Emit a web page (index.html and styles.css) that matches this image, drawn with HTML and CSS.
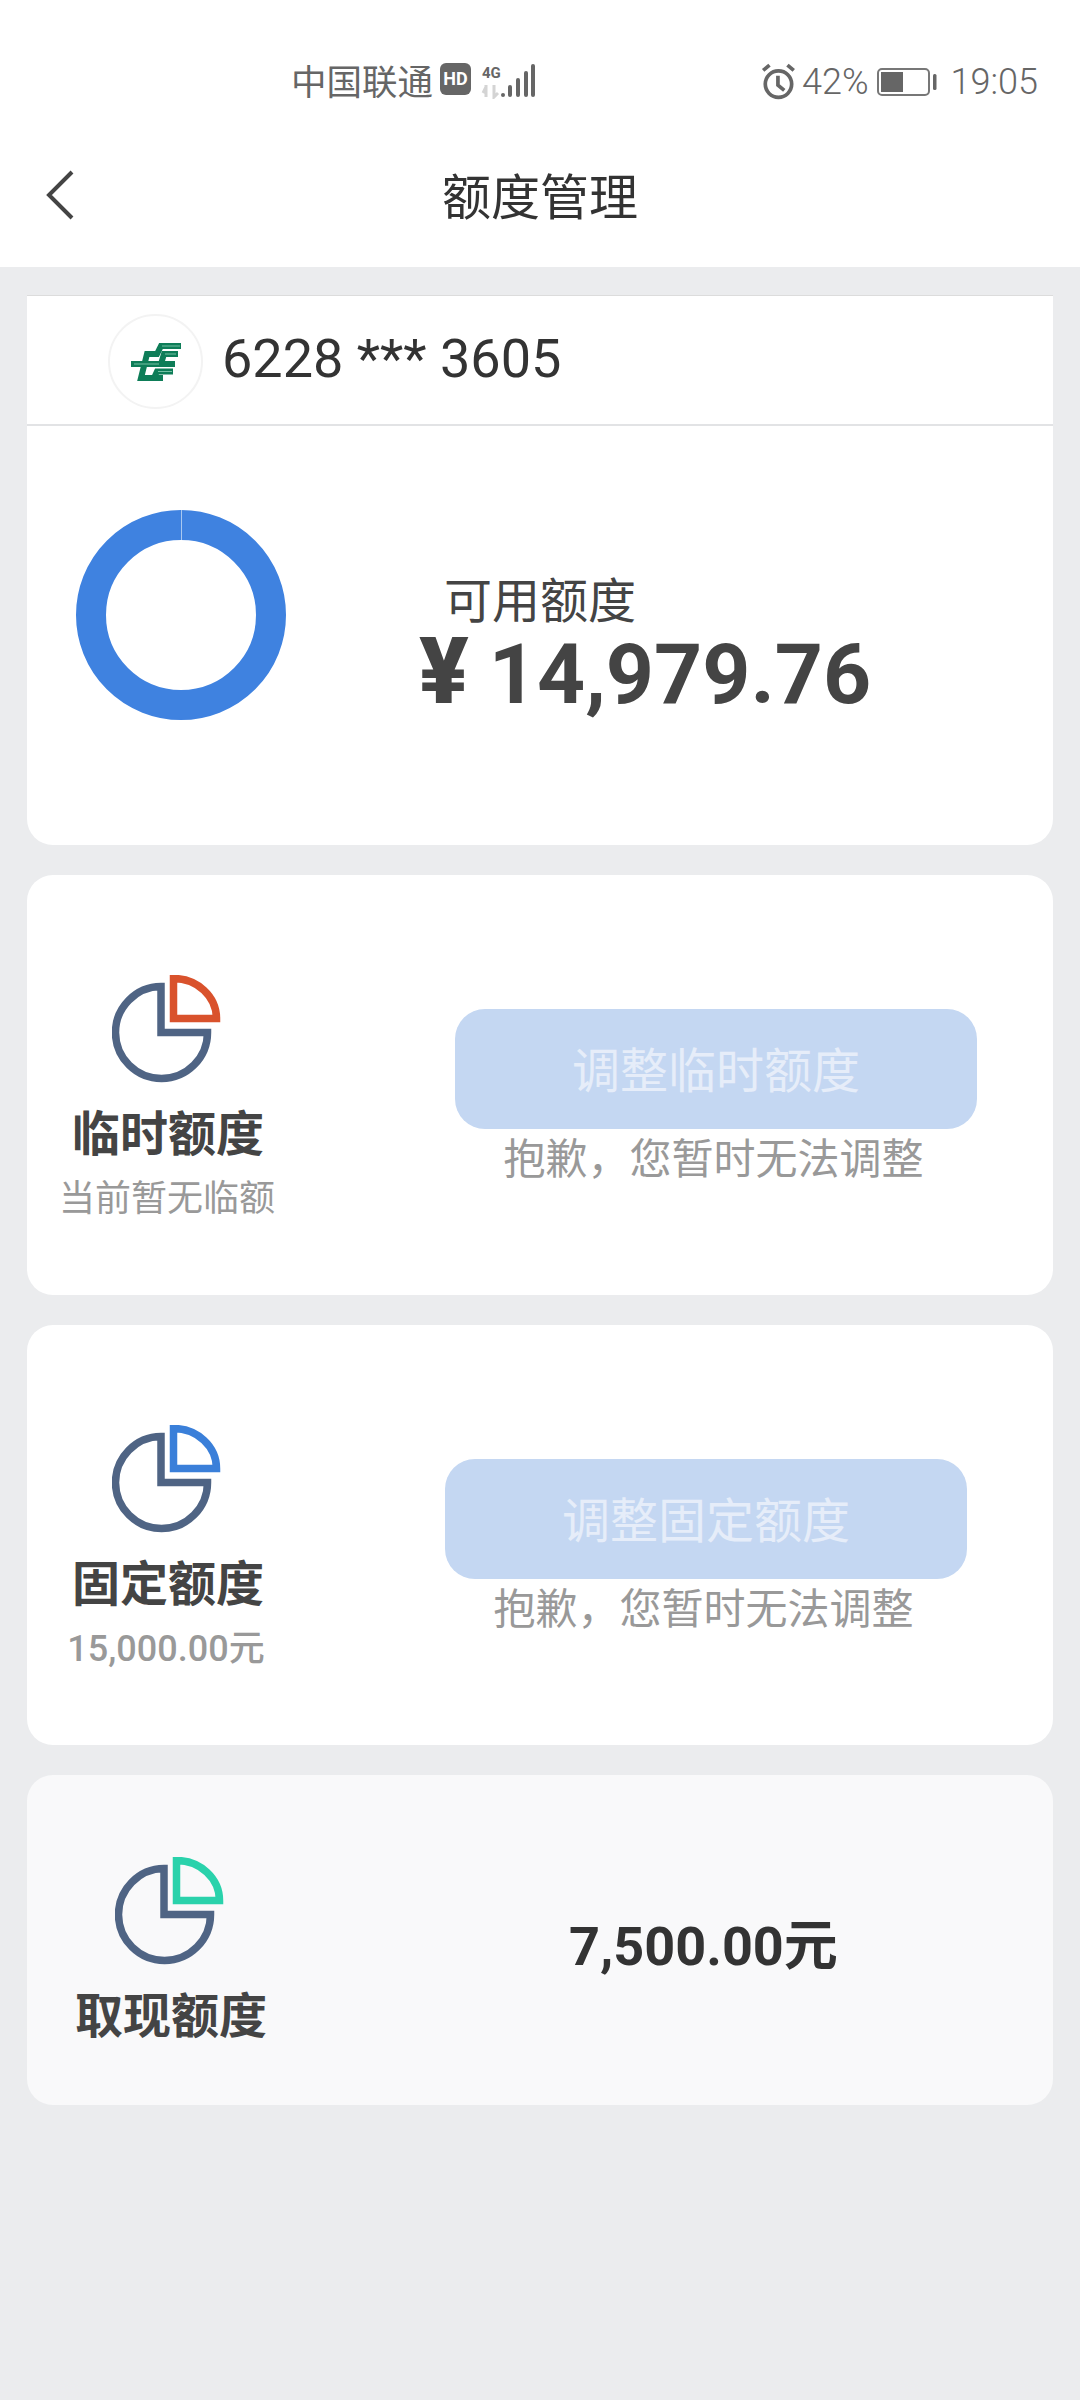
FILE: index.html
```html
<!DOCTYPE html>
<html lang="zh-CN">
<head>
    <meta charset="UTF-8">
    <meta name="viewport" content="width=device-width, initial-scale=1.0">
    <title>额度管理</title>
    <link rel="stylesheet" href="styles.css">
</head>
<body>
    <header class="top">
        <div class="status-bar">
            <div class="status-left">
                <span>中国联通</span>
                <span class="hd">HD</span>
                <svg class="signal" width="56" height="36" viewBox="0 0 56 36">
                    <text class="signal-4g" x="1" y="15">4G</text>
                    <path class="signal-off" d="M5 22v12M2 30l3-6M13 22v12l4-4"/>
                    <rect x="20" y="30" width="4" height="4" rx="2"/>
                    <rect x="27" y="22" width="4" height="12" rx="2"/>
                    <rect x="35" y="15" width="4" height="19" rx="2"/>
                    <rect x="43" y="8" width="4" height="26" rx="2"/>
                    <rect x="50" y="1" width="4" height="33" rx="2"/>
                </svg>
            </div>
            <div class="status-right">
                <svg class="alarm" width="38" height="38" viewBox="0 0 36 36">
                    <circle cx="17.500" cy="20" r="12.500"/>
                    <path d="M17 12v9l6 5M3 7l6-5M32 7l-6-5"/>
                </svg>
                <span class="pct">42%</span>
                <svg class="battery" width="60" height="28" viewBox="0 0 60 28">
                    <rect class="battery-case" x="1" y="1" width="51" height="26" rx="4"/>
                    <rect x="4" y="4" width="22" height="20"/>
                    <rect x="56" y="6" width="3.500" height="16" rx="1.500"/>
                </svg>
                <span class="time">19:05</span>
            </div>
        </div>
        <div class="nav">
            <svg class="back" width="30" height="50" viewBox="0 0 30 50">
                <polyline points="27,2 4,25 27,48"/>
            </svg>
            <h1>额度管理</h1>
        </div>
    </header>

    <main class="content">
        <section class="card card-first">
            <div class="bank-row">
                <div class="bank-logo">
                    <svg width="50" height="38" viewBox="0 0 50 38">
                        <path class="logo-a" d="M50 3H30L26 11H16L10 35H32"/>
                        <path class="logo-a" d="M47 11H33L30 21H0"/>
                        <path class="logo-a" d="M44 21H30M42 28.500H26L23 35"/>
                        <path class="logo-b" d="M49 3H31M45 11H34M3 21H28M41 28.500H27"/>
                    </svg>
                </div>
                <span class="bank-no">6228 *** 3605</span>
            </div>
            <div class="available">
                <div class="donut"><i class="donut-tick"></i></div>
                <div class="available-text">
                    <div class="available-label">可用额度</div>
                    <div class="available-num"><span class="yen">¥</span>14,979.76</div>
                </div>
            </div>
        </section>

        <section class="card limit">
            <div class="limit-left">
                <svg class="pie" width="112" height="108" viewBox="0 0 112 108">
                    <path class="pie-main" d="M49 11.500A46 46 0 1 0 95.500 57.500H49Z"/>
                    <path class="pie-part red" d="M61.500 3.500A43 40 0 0 1 104.500 43.500H61.500Z"/>
                </svg>
                <div class="limit-title">临时额度</div>
                <div class="limit-sub">当前暂无临额</div>
            </div>
            <div class="limit-right">
                <div class="adjust-btn">调整临时额度</div>
                <div class="adjust-tip">抱歉，您暂时无法调整</div>
            </div>
        </section>

        <section class="card limit">
            <div class="limit-left">
                <svg class="pie" width="112" height="108" viewBox="0 0 112 108">
                    <path class="pie-main" d="M49 11.500A46 46 0 1 0 95.500 57.500H49Z"/>
                    <path class="pie-part blue" d="M61.500 3.500A43 40 0 0 1 104.500 43.500H61.500Z"/>
                </svg>
                <div class="limit-title">固定额度</div>
                <div class="limit-sub limit-sub-num">15,000.00元</div>
            </div>
            <div class="limit-right limit-right-fixed">
                <div class="adjust-btn">调整固定额度</div>
                <div class="adjust-tip">抱歉，您暂时无法调整</div>
            </div>
        </section>

        <section class="card limit limit-cash">
            <div class="limit-left">
                <svg class="pie" width="112" height="108" viewBox="0 0 112 108">
                    <path class="pie-main" d="M49 11.500A46 46 0 1 0 95.500 57.500H49Z"/>
                    <path class="pie-part green" d="M61.500 3.500A43 40 0 0 1 104.500 43.500H61.500Z"/>
                </svg>
                <div class="limit-title">取现额度</div>
            </div>
            <div class="cash-amount">7,500.00元</div>
        </section>
    </main>
</body>
</html>
```

FILE: styles.css
```css
* {
    box-sizing: border-box;
}
body {
    margin: 0;
    width: 1080px;
    height: 2400px;
    overflow: hidden;
    background: #ebecee;
    color: #444;
    font-family: Roboto, "Noto Sans CJK SC", sans-serif;
}

/* top bar */
.top {
    height: 267px;
    background: #fff;
}
.status-bar {
    height: 166px;
    padding: 0 42px 3px 291px;
    display: flex;
    justify-content: space-between;
    align-items: center;
    color: #666;
    font-size: 36px;
}
.status-left,
.status-right {
    display: flex;
    align-items: center;
}
.status-left {
    padding-bottom: 5px;
}
.status-left span:first-child {
    font-size: 35.500px;
}
.hd {
    width: 31px;
    height: 32px;
    margin-left: 7px;
    border-radius: 6px;
    background: #666;
    color: #fff;
    font-size: 18px;
    font-weight: 700;
    line-height: 32px;
    text-align: center;
}
.signal {
    margin: 4px 0 0 10px;
    fill: #666;
}
.signal-4g {
    font-size: 15px;
    font-weight: 700;
}
.signal-off {
    fill: none;
    stroke: #d4d4d4;
    stroke-width: 3;
}
.alarm {
    fill: none;
    stroke: #666;
    stroke-width: 3.500;
}
.pct {
    margin-left: 4px;
    font-weight: 300;
}
.battery {
    margin-left: 8px;
    fill: #666;
}
.battery-case {
    fill: none;
    stroke: #777;
    stroke-width: 2;
}
.time {
    margin-left: 14px;
    font-weight: 300;
}
.nav {
    display: grid;
    grid-template-columns: 1fr auto 1fr;
    align-items: center;
    height: 60px;
    padding-left: 45px;
}
.nav h1 {
    margin: 3px 0 0 -45px;
    grid-column: 2;
    font-size: 49px;
    font-weight: 400;
    line-height: 60px;
    color: #333;
}
.back {
    grid-column: 1;
    grid-row: 1;
    margin-top: -5px;
    fill: none;
    stroke: #444;
    stroke-width: 4;
}

/* cards */
.content {
    padding: 28px 27px;
    display: flex;
    flex-direction: column;
    gap: 30px;
}
.card {
    background: #fff;
    border-radius: 26px;
}
.card-first {
    height: 550px;
    border-top: 1px solid #dcdcdc;
    border-radius: 0 0 26px 26px;
}
.bank-row {
    height: 130px;
    padding: 3px 0 0 81px;
    display: flex;
    align-items: center;
    border-bottom: 2px solid #e2e3e5;
}
.bank-logo {
    width: 95px;
    height: 95px;
    border: 2px solid #f3f3f3;
    border-radius: 50%;
    display: flex;
    align-items: center;
    justify-content: center;
}
.logo-a {
    fill: none;
    stroke: #0e7d58;
    stroke-width: 6;
}
.logo-b {
    fill: none;
    stroke: #8fd3b8;
    stroke-width: 0.800;
}
.bank-no {
    margin: 0 0 6px 19px;
    font-size: 54px;
    color: #333;
}
.available {
    display: flex;
    padding: 84px 0 0 49px;
}
.donut {
    width: 210px;
    height: 210px;
    border: 30px solid #3f82e0;
    border-radius: 50%;
    display: flex;
    justify-content: center;
    align-items: flex-start;
}
.donut-tick {
    width: 1px;
    height: 30px;
    margin-top: -30px;
    background: #a9c8f0;
}
.available-text {
    margin: 65px 0 0 133px;
}
.available-label {
    margin-left: 25px;
    font-size: 48px;
    line-height: 54px;
}
.available-num {
    height: 84px;
    margin-top: -3px;
    font-size: 84px;
    font-weight: 700;
    line-height: 84px;
}
.yen {
    font-size: 92px;
    font-weight: 900;
    line-height: 1;
    margin-right: 20px;
}

/* limit cards */
.limit {
    height: 420px;
    display: flex;
}
.limit-left {
    width: 282px;
    padding-top: 100px;
    display: flex;
    flex-direction: column;
    align-items: center;
}
.pie {
    display: block;
}
.pie-main,
.pie-part {
    fill: none;
    stroke-width: 7.500;
}
.pie-main {
    stroke: #4f6484;
}
.red {
    stroke: #d9522c;
}
.blue {
    stroke: #3a7fd9;
}
.green {
    stroke: #2ad2ab;
}
.limit-title {
    margin-top: 24px;
    font-size: 48px;
    font-weight: 700;
    line-height: 56px;
}
.limit-sub {
    margin: 14px 2px 0 0;
    font-size: 36px;
    line-height: 44px;
    color: #999;
}
.limit-sub-num {
    margin-left: -2px;
    font-weight: 500;
}
.limit-right {
    margin: 134px 0 0 146px;
}
.limit-right-fixed {
    margin-left: 136px;
}
.adjust-btn {
    width: 522px;
    height: 120px;
    border-radius: 30px;
    background: #c4d7f2;
    color: #e6edf9;
    font-size: 48px;
    line-height: 125px;
    text-align: center;
}
.adjust-tip {
    margin: 6px 5px 0 0;
    font-size: 42px;
    line-height: 50px;
    color: #999;
    text-align: center;
}
.limit-cash {
    height: 330px;
    background: #f9f9fa;
}
.limit-cash .limit-left {
    margin-left: 3px;
    padding-top: 82px;
}
.cash-amount {
    margin: 137px 0 0 257px;
    font-size: 54px;
    font-weight: 700;
    line-height: 70px;
    color: #333;
}
```
